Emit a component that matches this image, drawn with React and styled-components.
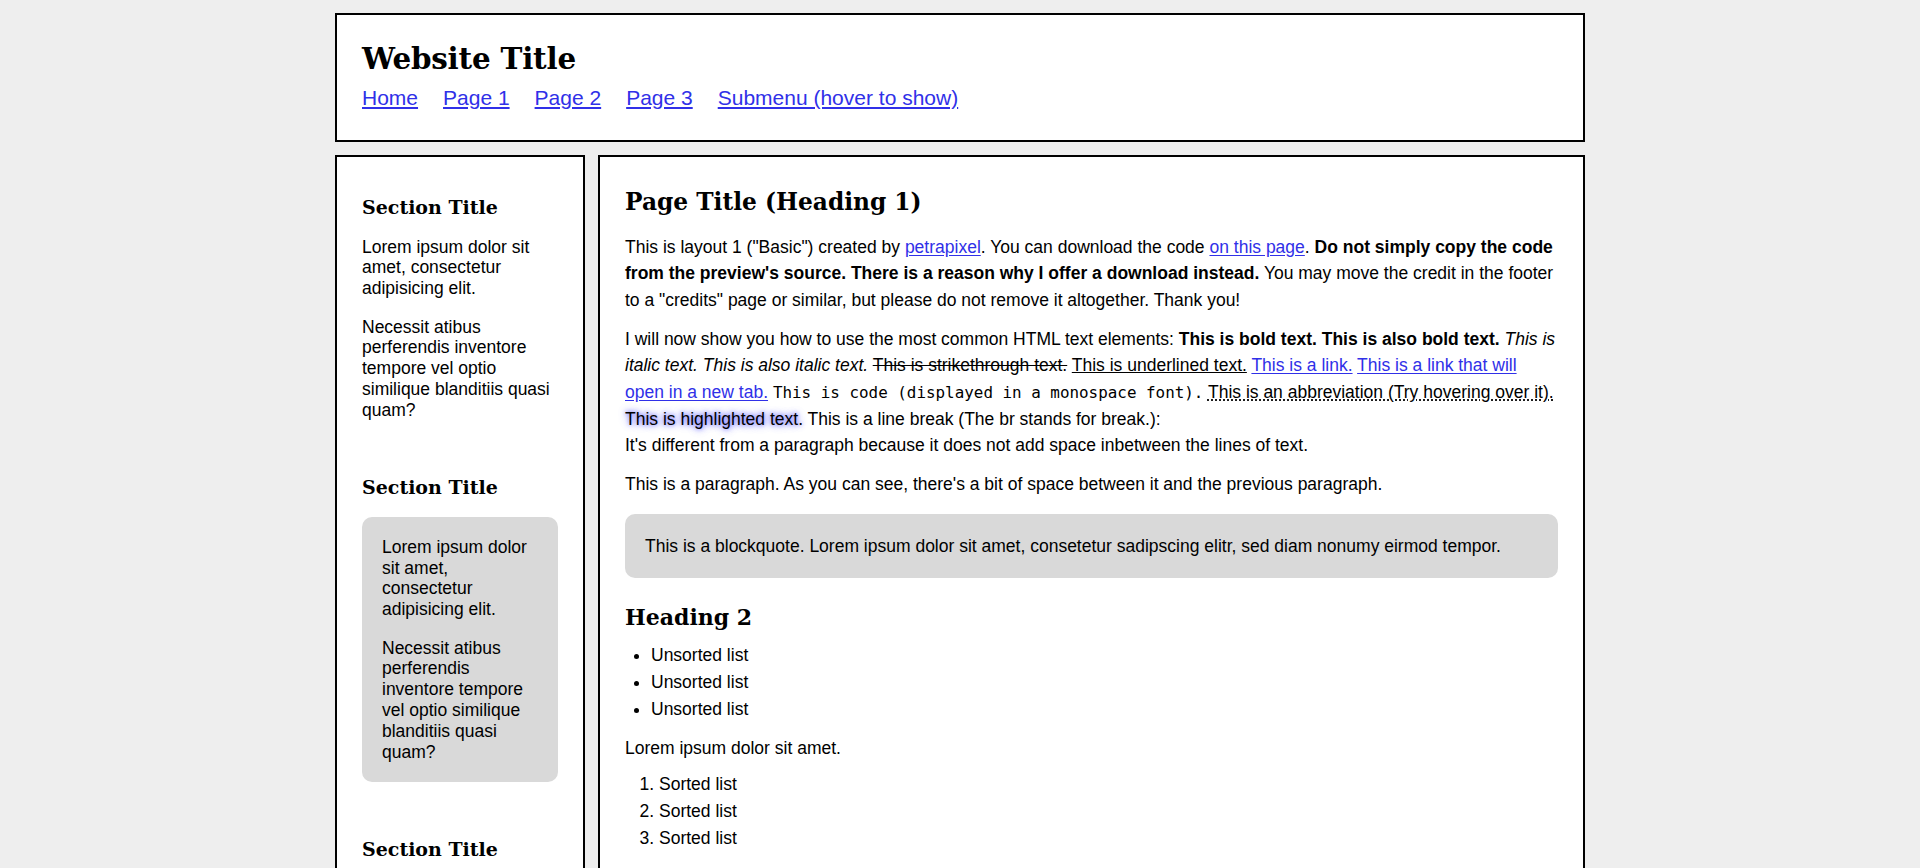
import React from "react";
import styled, { createGlobalStyle } from "styled-components";

const GlobalStyle = createGlobalStyle`
  html, body { margin: 0; padding: 0; }
  body {
    background: #eeeeee;
    color: #000;
    font-family: "Liberation Sans", Arial, sans-serif;
    font-size: 17.5px;
  }
  * { box-sizing: border-box; }
`;

const Page = styled.div`
  width: 1250px;
  margin: 0 auto;
  padding-top: 13px;
  display: flex;
  flex-direction: column;
  gap: 13px;
`;

const Header = styled.header`
  background: #fff;
  border: 2px solid #000;
  padding: 25px;
`;

const SiteTitle = styled.h1`
  margin: 0;
  font-family: "DejaVu Serif", Georgia, serif;
  font-weight: bold;
  font-size: 29.4px;
  line-height: 38px;
  letter-spacing: -0.2px;
`;

const Nav = styled.nav`
  margin-top: 2px;
  display: flex;
  gap: 25px;
  font-size: 21px;
  line-height: 35px;
`;

const Link = styled.a`
  color: #3030e8;
  text-decoration: underline;
  text-underline-offset: 2px;
  cursor: pointer;
`;

const Columns = styled.div`
  display: grid;
  grid-template-columns: 250px 1fr;
  gap: 13px;
  align-items: start;
`;

const Box = styled.div`
  background: #fff;
  border: 2px solid #000;
  padding: 25px;
`;

const Sidebar = styled(Box).attrs({ as: "aside" })`
  line-height: 20.8px;
`;

const SideSection = styled.section`
  display: flow-root;
  margin-bottom: 24px;
`;

const SideTitle = styled.h2`
  margin: 13px 0 0;
  font-family: "DejaVu Serif", Georgia, serif;
  font-weight: bold;
  font-size: 19px;
  line-height: 24px;
`;

const SideText = styled.p`
  margin: 17.6px 0;
`;

const SideBox = styled.div`
  margin: 17.6px 0;
  padding: 20px;
  background: #d9d9d9;
  border-radius: 10px;
  & > p:first-child { margin-top: 0; }
  & > p:last-child { margin-bottom: 0; }
`;

const Main = styled(Box).attrs({ as: "main" })`
  line-height: 26.4px;
`;

const PageTitle = styled.h1`
  margin: 5px 0 17px;
  font-family: "DejaVu Serif", Georgia, serif;
  font-weight: bold;
  font-size: 23.3px;
  line-height: 30px;
`;

const SubHeading = styled.h2`
  margin: 25px 0 0;
  font-family: "DejaVu Serif", Georgia, serif;
  font-weight: bold;
  font-size: 22px;
  line-height: 28px;
`;

const Text = styled.p`
  margin: 12.5px 0;
`;

const Quote = styled.blockquote`
  margin: 16.5px 0;
  padding: 18.5px 20px;
  background: #d9d9d9;
  border-radius: 10px;
  & > p { margin: 0; }
`;

const List = styled.ul`
  margin: ${(p) => (p.as === "ol" ? "-3px 0 12.5px" : "11px 0 12.5px")};
  padding-left: ${(p) => (p.as === "ol" ? "34px" : "26px")};
  line-height: 27px;
`;

const Item = styled.li``;

const Strike = styled.s``;

const Under = styled.u``;

const Code = styled.code`
  font-family: "DejaVu Sans Mono", "Liberation Mono", monospace;
  font-size: 15.9px;
`;

const Abbr = styled.abbr`
  text-decoration: underline dotted;
  text-underline-offset: 2px;
  cursor: help;
`;

const Mark = styled.mark`
  background: transparent;
  color: inherit;
  text-shadow: 0 0 4px #6a6aff, 0 0 9px #a0a0ff, 0 0 12px #c4c4ff;
`;

const sideIntro = [
  "Lorem ipsum dolor sit amet, consectetur adipisicing elit.",
  "Necessit atibus perferendis inventore tempore vel optio similique blanditiis quasi quam?",
];

export default function App() {
  return (
    <>
      <GlobalStyle />
      <Page>
        <Header>
          <SiteTitle>Website Title</SiteTitle>
          <Nav>
            <Link>Home</Link>
            <Link>Page 1</Link>
            <Link>Page 2</Link>
            <Link>Page 3</Link>
            <Link>Submenu (hover to show)</Link>
          </Nav>
        </Header>
        <Columns>
          <Sidebar>
            <SideSection>
              <SideTitle>Section Title</SideTitle>
              {sideIntro.map((t) => (
                <SideText key={t}>{t}</SideText>
              ))}
            </SideSection>
            <SideSection>
              <SideTitle>Section Title</SideTitle>
              <SideBox>
                {sideIntro.map((t) => (
                  <SideText key={t}>{t}</SideText>
                ))}
              </SideBox>
            </SideSection>
            <SideSection>
              <SideTitle>Section Title</SideTitle>
              {sideIntro.map((t) => (
                <SideText key={t}>{t}</SideText>
              ))}
            </SideSection>
          </Sidebar>
          <Main>
            <PageTitle>Page Title (Heading 1)</PageTitle>
            <Text>
              This is layout 1 ("Basic") created by <Link>petrapixel</Link>. You can download the code{" "}
              <Link>on this page</Link>.{" "}
              <strong>
                Do not simply copy the code from the preview's source. There is a reason why I offer a download
                instead.
              </strong>{" "}
              You may move the credit in the footer to a "credits" page or similar, but please do not remove it
              altogether. Thank you!
            </Text>
            <Text>
              I will now show you how to use the most common HTML text elements: <strong>This is bold text.</strong>{" "}
              <b>This is also bold text.</b> <em>This is italic text.</em> <i>This is also italic text.</i>{" "}
              <Strike>This is strikethrough text.</Strike> <Under>This is underlined text.</Under>{" "}
              <Link>This is a link.</Link> <Link>This is a link that will open in a new tab.</Link>{" "}
              <Code>This is code (displayed in a monospace font).</Code>{" "}
              <Abbr title="Abbreviation">This is an abbreviation (Try hovering over it).</Abbr>{" "}
              <Mark>This is highlighted text.</Mark> This is a line break (The br stands for break.):
              <br />
              It's different from a paragraph because it does not add space inbetween the lines of text.
            </Text>
            <Text>This is a paragraph. As you can see, there's a bit of space between it and the previous paragraph.</Text>
            <Quote>
              <p>This is a blockquote. Lorem ipsum dolor sit amet, consetetur sadipscing elitr, sed diam nonumy eirmod tempor.</p>
            </Quote>
            <SubHeading>Heading 2</SubHeading>
            <List>
              <Item>Unsorted list</Item>
              <Item>Unsorted list</Item>
              <Item>Unsorted list</Item>
            </List>
            <Text>Lorem ipsum dolor sit amet.</Text>
            <List as="ol">
              <Item>Sorted list</Item>
              <Item>Sorted list</Item>
              <Item>Sorted list</Item>
            </List>
            <SubHeading>Heading 3</SubHeading>
            <Text>
              Lorem ipsum dolor sit amet, consetetur sadipscing elitr, sed diam nonumy eirmod tempor invidunt ut labore
              et dolore magna aliquyam erat, sed diam voluptua.
            </Text>
          </Main>
        </Columns>
      </Page>
    </>
  );
}
